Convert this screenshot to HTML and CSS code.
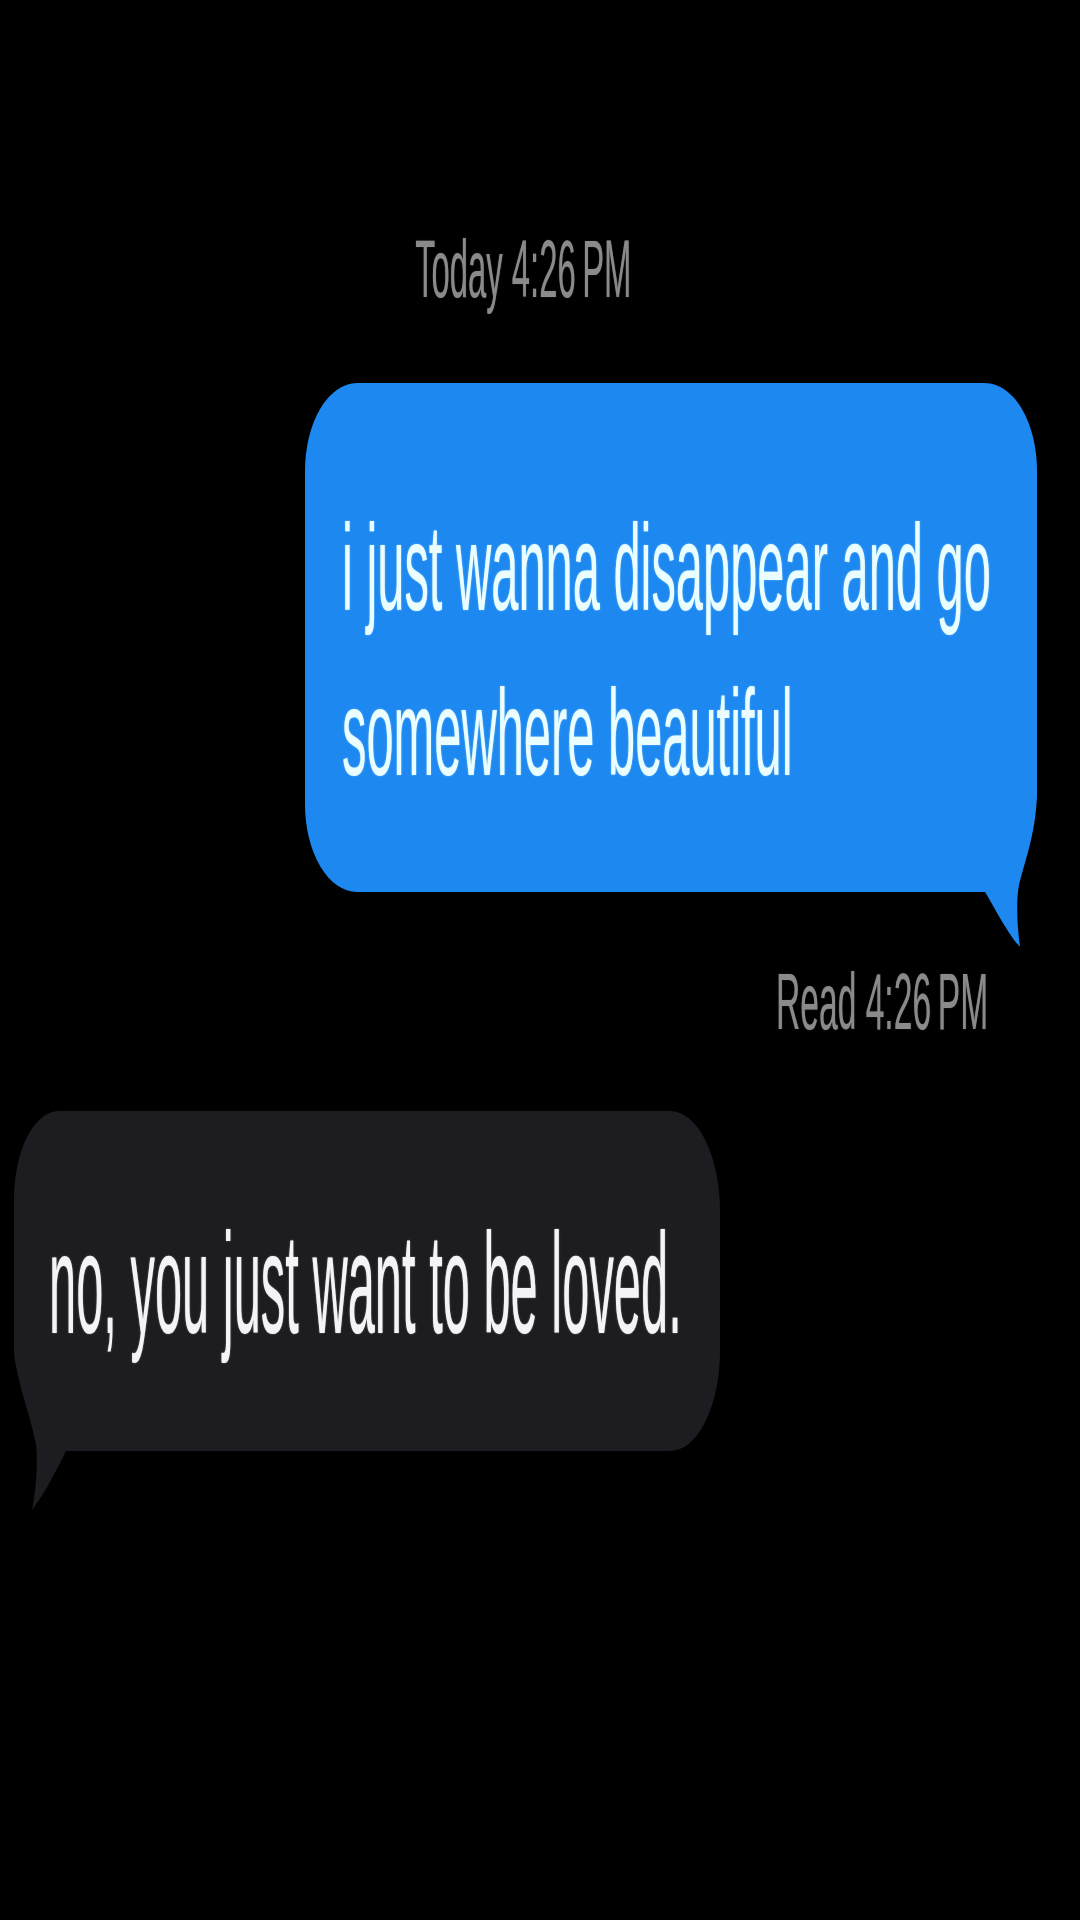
FILE: index.html
```html
<!DOCTYPE html>
<html lang="en">
<head>
<meta charset="utf-8">
<title>Messages</title>
<link rel="stylesheet" href="styles.css">
</head>
<body>
<div class="chat">
  <div class="stamp stamp-today"><span class="stamp-text">Today 4:26&#8201;PM</span></div>

  <div class="row row-out">
    <div class="bubble bubble-out">
      <div class="msg msg-out">i just wanna disappear and go<br>somewhere beautiful</div>
      <svg class="tail tail-out" viewBox="0 0 220 160" width="220" height="160" aria-hidden="true">
        <path d="M0 0 H220 C220 40 208 70 202 95 C199 110 200 135 203 157 C198 152 190 140 183 128 C177 118 172 108 168 102 H0 Z" fill="#1e88f1"/>
      </svg>
    </div>
  </div>

  <div class="stamp stamp-read"><span class="stamp-text">Read 4:26&#8201;PM</span></div>

  <div class="row row-in">
    <div class="bubble bubble-in">
      <div class="msg msg-in">no, you just want to be loved.</div>
      <svg class="tail tail-in" viewBox="0 0 220 162" width="220" height="162" aria-hidden="true">
        <path d="M220 0 H0 C2 30 18 70 22 95 C24 115 22 140 18 160 C24 152 32 140 38 128 C44 117 48 110 52 101 H220 Z" fill="#1d1c20"/>
      </svg>
    </div>
  </div>
</div>
</body>
</html>
```

FILE: styles.css
```css
html, body {
  margin: 0;
  padding: 0;
  background: #000;
  overflow: hidden;
}

body {
  width: 1080px;
  height: 1920px;
  font-family: "Liberation Sans", Arial, sans-serif;
}

.chat {
  display: flex;
  flex-direction: column;
  padding-top: 228px;
}

.stamp {
  display: flex;
  color: #8a8a8a;
  font-size: 82px;
  line-height: 82px;
  white-space: nowrap;
}

.stamp-text {
  display: inline-block;
  transform: scaleX(0.4);
  text-shadow: 0 0 2px rgba(140, 140, 140, 0.5);
}

.stamp-today {
  justify-content: center;
  padding-right: 34px;
}

.stamp-today .stamp-text {
  transform-origin: 50% 0;
}

.stamp-read {
  justify-content: flex-end;
  padding-right: 92px;
  margin-top: 70px;
  font-size: 80px;
  line-height: 80px;
}

.stamp-read .stamp-text {
  transform: scaleX(0.42);
  transform-origin: 100% 0;
}

.row {
  display: flex;
}

.row-out {
  justify-content: flex-end;
  padding-right: 43px;
  margin-top: 73px;
}

.row-in {
  justify-content: flex-start;
  padding-left: 14px;
  margin-top: 69px;
}

.bubble {
  position: relative;
  box-sizing: border-box;
}

.bubble-out {
  width: 732px;
  background: #1e88f1;
  padding: 102px 0 77px 37px;
  border-radius: 52px 52px 200px 52px / 88px 88px 100px 88px;
}

.bubble-in {
  width: 706px;
  background: #1d1c20;
  padding: 88px 0 82px 35px;
  border-radius: 45px 50px 50px 200px / 88px 100px 100px 100px;
}

.msg {
  white-space: nowrap;
  transform-origin: 0 0;
  position: relative;
  z-index: 1;
}

.msg-out {
  color: #eafdff;
  font-size: 123px;
  line-height: 165px;
  transform: scaleX(0.397);
  text-shadow: 0 0 3px rgba(170, 235, 255, 0.6);
}

.msg-in {
  color: #f4f4f6;
  font-size: 142px;
  line-height: 170px;
  transform: scaleX(0.344);
  text-shadow: 0 0 3px rgba(255, 255, 255, 0.45);
}

.tail {
  position: absolute;
  display: block;
}

.tail-out {
  right: 0;
  bottom: -58px;
}

.tail-in {
  left: 0;
  bottom: -61px;
}
```
